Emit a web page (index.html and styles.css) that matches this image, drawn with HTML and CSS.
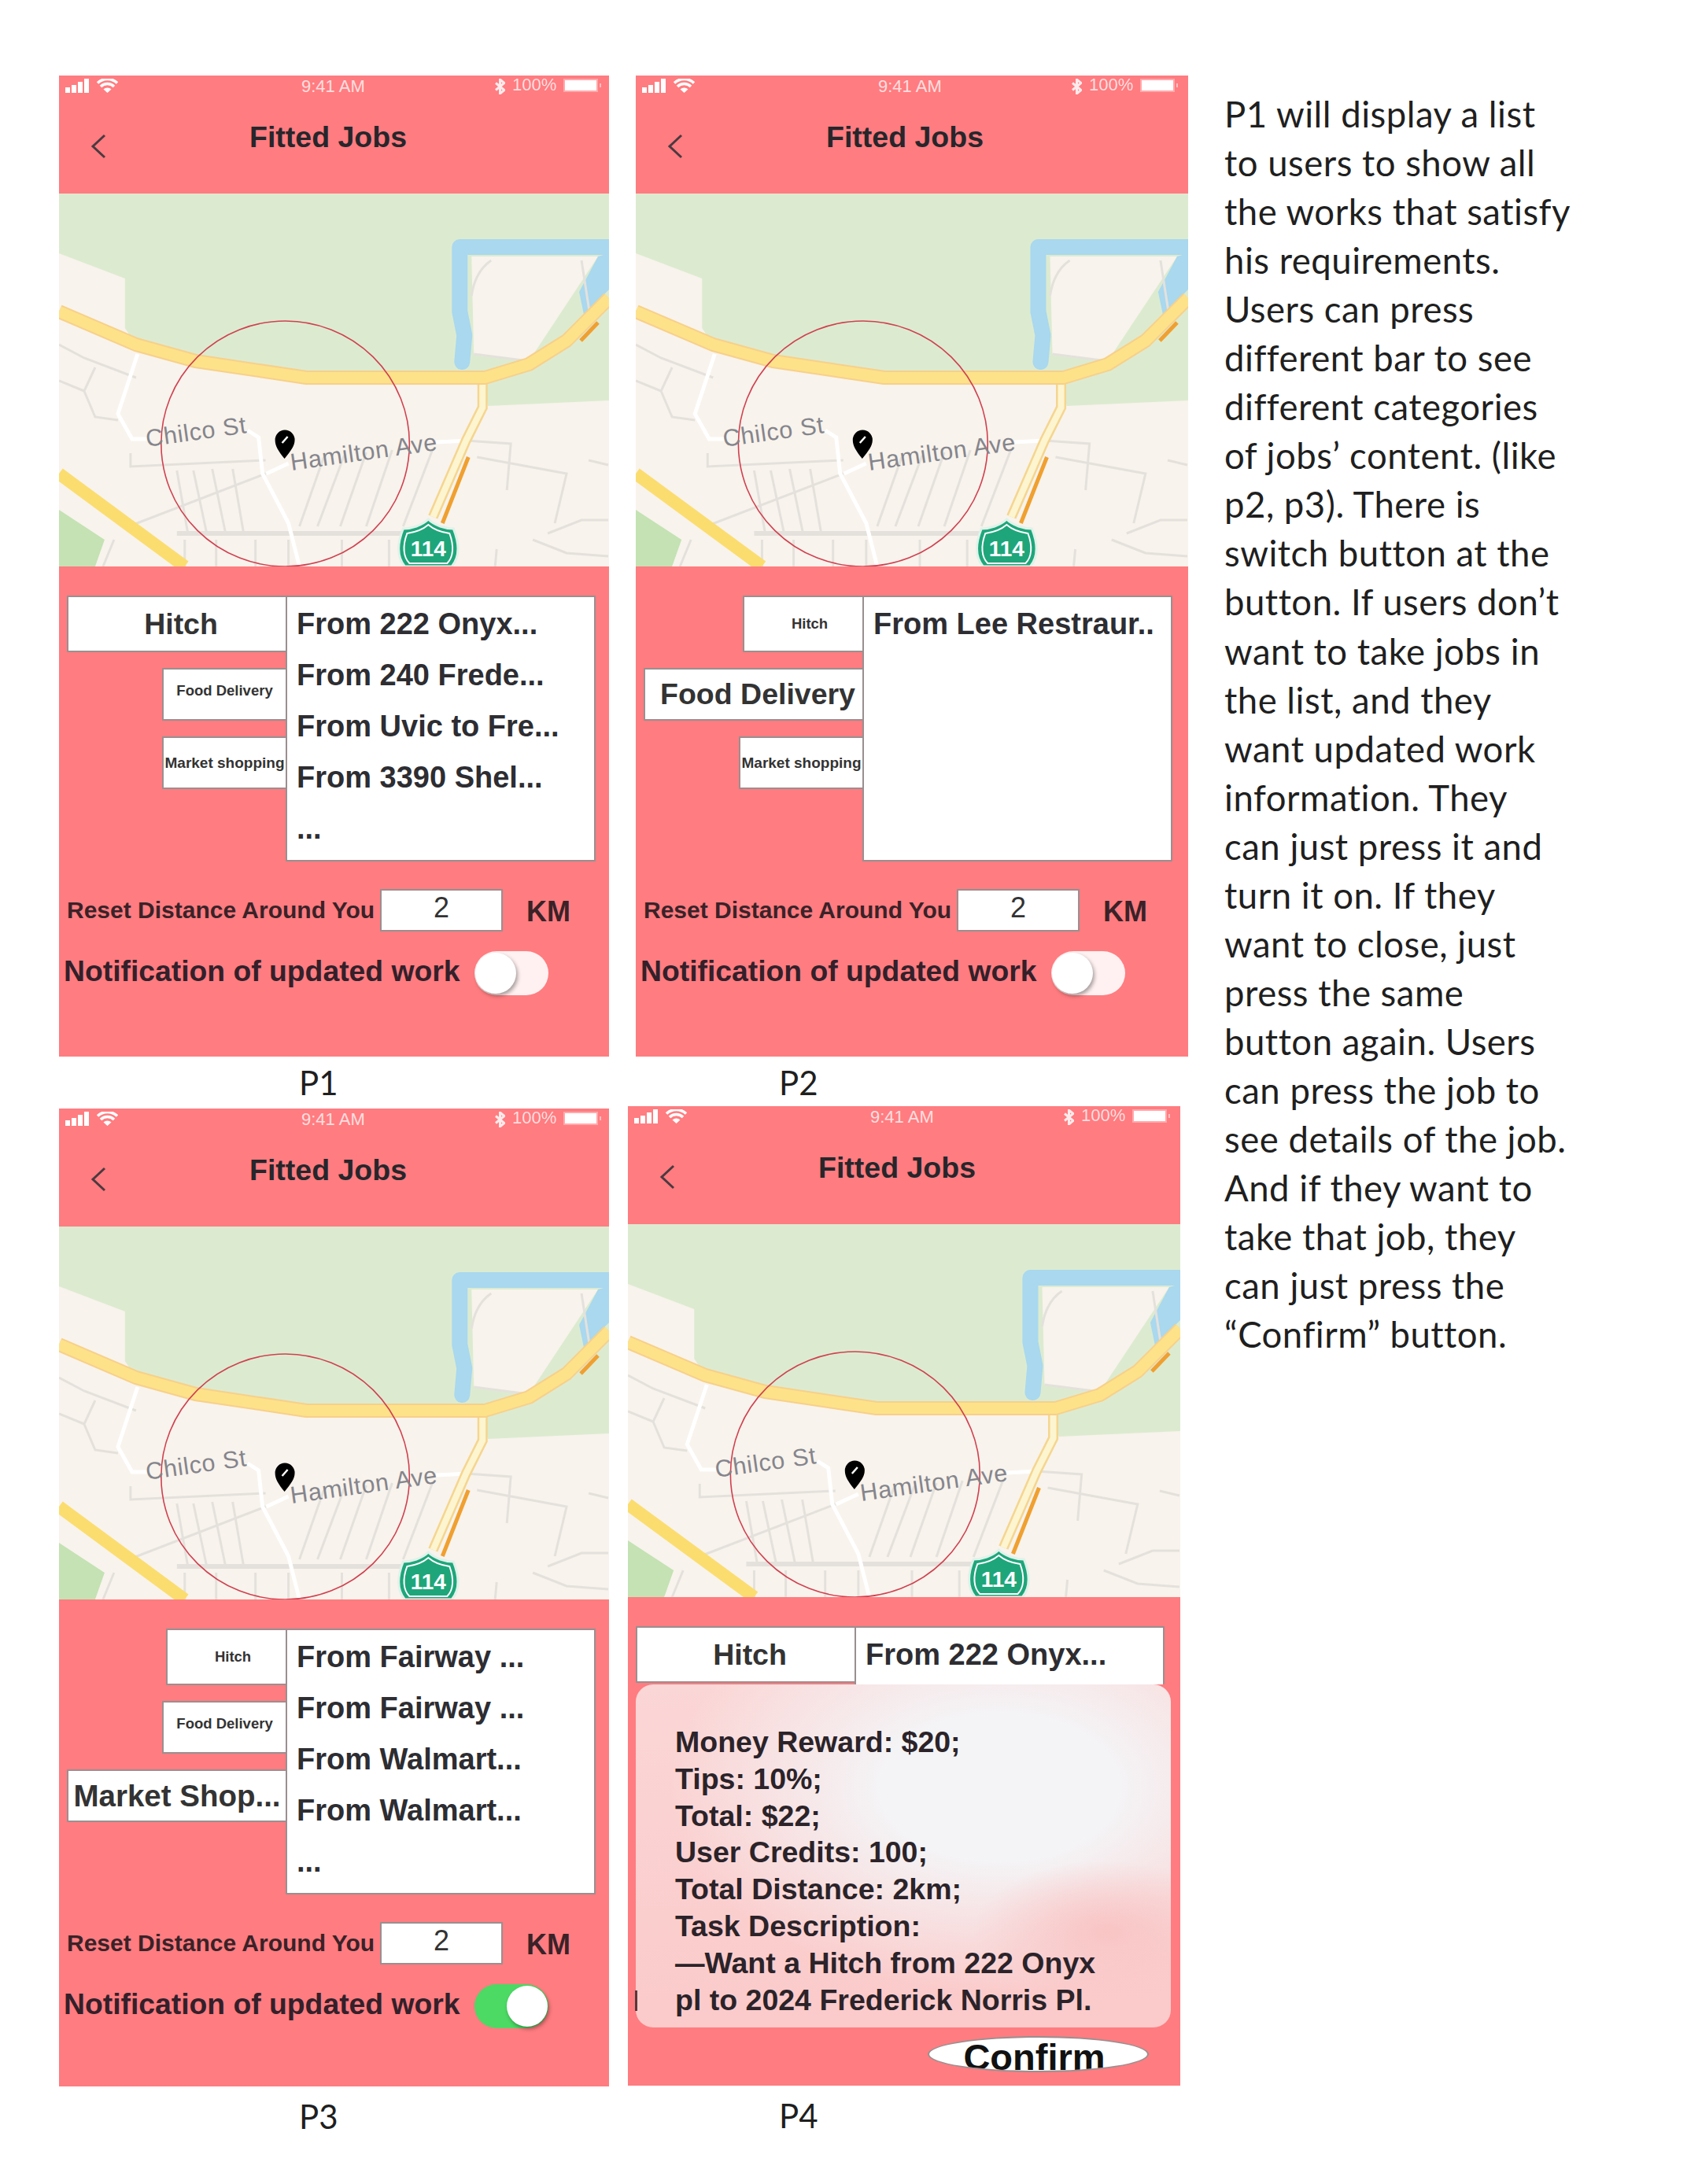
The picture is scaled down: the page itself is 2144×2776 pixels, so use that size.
FILE: index.html
```html
<!DOCTYPE html>
<html>
<head>
  <title>Fitted Jobs</title>
  <link rel="stylesheet" href="styles.css">
</head>
<body>
  <!-- Shared drawings, labels are added per screen -->
  <svg class="defs">
    <symbol id="map" viewBox="0 0 700 474" preserveAspectRatio="none">
      <rect width="700" height="474" fill="#f8f3ec"/>
      <path d="M0 0H700V263L546 270L540 234L315 234L174 213L98 192L84 171V108L0 76Z" fill="#dcebd0"/>
      <path d="M0 402L58 440L46 474H0Z" fill="#c4e2b4"/>
      <path d="M513 214L516 180L510 150V68H700" fill="none" stroke="#a9d8ef" stroke-width="20" stroke-linejoin="round" stroke-linecap="round"/>
      <path d="M525 80H686L598 213L528 204Z" fill="#f8f3ec"/>
      <path d="M686 80L700 76V122L668 154L662 125Z" fill="#a9d8ef"/>
      <g fill="none" stroke="#e4e1dc" stroke-width="3">
        <path d="M337 335L306 423M363 333L329 423M391 329L358 423M424 326L391 423M476 324L438 423"/>
        <path d="M150 352L164 432M171 352L188 432M195 350L212 432M221 350L235 432"/>
        <path d="M91 330V347L263 339M89 423L263 356M56 474L70 440"/>
        <path d="M0 192L32 209L98 234M46 221L32 251L46 284L75 288M0 238L32 251"/>
        <path d="M518 314L575 318L570 377M532 335L646 356L631 419M674 339L699 345"/>
        <path d="M622 432L665 415L699 415M603 440L646 457L699 461M557 452L555 474"/>
        <path d="M160 440V474M200 440V474M250 440V474M292 440V474M360 440V474M420 440V474"/>
        <path d="M528 204L598 213M550 85C535 95 528 110 525 130M665 85L675 150"/>
        <path d="M150 432H438" stroke-width="6"/>
      </g>
      <path d="M100 204L75 280L93 312H112M240 301L254 310L259 356L292 419L306 474M264 356L292 343M480 316L518 314" fill="none" stroke="#fff" stroke-width="5"/>
      <path d="M0 356L160 474" fill="none" stroke="#fbdd6f" stroke-width="16"/>
      <path d="M539 238V272L518 314L476 411" fill="none" stroke="#f5d58f" stroke-width="13"/>
      <path d="M539 238V272L518 314L476 411" fill="none" stroke="#fdf5d0" stroke-width="8"/>
      <path d="M0 150L98 192L174 213L315 234H542L598 217L646 187L700 133" fill="none" stroke="#f7d08a" stroke-width="18" stroke-linejoin="round"/>
      <path d="M0 150L98 192L174 213L315 234H542L598 217L646 187L700 133" fill="none" stroke="#fde28a" stroke-width="14" stroke-linejoin="round"/>
      <path d="M664 187L686 164M488 419L521 335" fill="none" stroke="#f0a030" stroke-width="5"/>
      <path d="M470 414C478 422 492 426 502 426C510 446 510 462 500 474H440C430 462 430 446 438 426C448 426 462 422 470 414Z" fill="#1ea67a" stroke="#dff2ea" stroke-width="3"/>
      <path d="M470 421C478 428 490 431 497 432C503 448 502 462 494 470H446C438 462 437 448 443 432C450 431 462 428 470 421Z" fill="none" stroke="#fff" stroke-width="2"/>
      <ellipse cx="288" cy="318" rx="158" ry="156" fill="none" stroke="#d04050" stroke-width="1.6"/>
      <path d="M287 337C279 327 275 321 275 313A12.500 12.500 0 0 1 300 313C300 321 295 327 287 337Z" fill="#000"/>
      <path d="M291 309L284 317" stroke="#fff" stroke-width="2.500"/>
    </symbol>
    <symbol id="signal" viewBox="0 0 67 18">
      <path d="M0 11h6v7H0zM8 8h6v10H8zM16 4h6v14h-6zM24 0h6v18h-6z" fill="#fff"/>
      <path d="M41 5.500a18 18 0 0 1 25 0M45 10a12 12 0 0 1 17 0" fill="none" stroke="#fff" stroke-width="3.500"/>
      <path d="M48.500 13.500a7 7 0 0 1 10 0L53.500 18Z" fill="#fff"/>
    </symbol>
    <symbol id="bluetooth" viewBox="0 0 13 20">
      <path d="M1 5.500l11 9-5.500 4.500V1l5.500 4.500-11 9" fill="none" stroke="#fff" stroke-width="3"/>
    </symbol>
    <symbol id="chevron" viewBox="0 0 20 32">
      <path d="M18 2L3 16l15 14" fill="none" stroke="#4a3a40" stroke-width="3"/>
    </symbol>
  </svg>

  <div class="sheet">
    <div class="boards">
      <div class="row row-top">
        <!-- P1 -->
        <div class="screen">
          <div class="phone">
            <div class="status">
              <svg class="signal"><use href="#signal"/></svg>
              <span class="time">9:41 AM</span>
              <svg class="bt"><use href="#bluetooth"/></svg>
              <span class="pct">100%</span>
              <span class="battery"></span>
            </div>
            <div class="titlebar">
              <svg class="back"><use href="#chevron"/></svg>
              <h1>Fitted Jobs</h1>
            </div>
            <svg class="map" viewBox="0 0 700 474" preserveAspectRatio="none">
              <use href="#map"/>
              <text class="street" transform="translate(112 322) rotate(-8)">Chilco St</text>
              <text class="street" transform="translate(296 352) rotate(-8)">Hamilton Ave</text>
              <text class="route" x="470" y="461">114</text>
            </svg>
            <div class="panel">
              <div class="browse">
                <div class="tabs">
                  <div class="tab tab-big">Hitch</div>
                  <div class="tab tab-small tab-food">Food Delivery</div>
                  <div class="tab tab-small tab-market">Market shopping</div>
                </div>
                <div class="list">
                  <div class="job">From 222 Onyx...</div>
                  <div class="job">From 240 Frede...</div>
                  <div class="job">From Uvic to Fre...</div>
                  <div class="job">From 3390 Shel...</div>
                  <div class="job">...</div>
                </div>
              </div>
              <div class="distance">
                <span class="distance-label">Reset Distance Around You</span>
                <span class="distance-value">2</span>
                <span class="distance-unit">KM</span>
              </div>
              <div class="notify">
                <span>Notification of updated work</span>
                <span class="toggle"></span>
              </div>
            </div>
          </div>
          <div class="caption">P1</div>
        </div>

        <!-- P2 -->
        <div class="screen">
          <div class="phone phone-wide">
            <div class="status">
              <svg class="signal"><use href="#signal"/></svg>
              <span class="time">9:41 AM</span>
              <svg class="bt"><use href="#bluetooth"/></svg>
              <span class="pct">100%</span>
              <span class="battery"></span>
            </div>
            <div class="titlebar">
              <svg class="back"><use href="#chevron"/></svg>
              <h1>Fitted Jobs</h1>
            </div>
            <svg class="map" viewBox="0 0 700 474" preserveAspectRatio="none">
              <use href="#map"/>
              <text class="street" transform="translate(112 322) rotate(-8)">Chilco St</text>
              <text class="street" transform="translate(296 352) rotate(-8)">Hamilton Ave</text>
              <text class="route" x="470" y="461">114</text>
            </svg>
            <div class="panel">
              <div class="browse">
                <div class="tabs">
                  <div class="tab tab-small tab-hitch">Hitch</div>
                  <div class="tab tab-big tab-mid">Food Delivery</div>
                  <div class="tab tab-small tab-market">Market shopping</div>
                </div>
                <div class="list">
                  <div class="job">From Lee Restraur..</div>
                </div>
              </div>
              <div class="distance">
                <span class="distance-label">Reset Distance Around You</span>
                <span class="distance-value">2</span>
                <span class="distance-unit">KM</span>
              </div>
              <div class="notify">
                <span>Notification of updated work</span>
                <span class="toggle"></span>
              </div>
            </div>
          </div>
          <div class="caption">P2</div>
        </div>
      </div>

      <div class="row row-bottom">
        <!-- P3 -->
        <div class="screen screen-p3">
          <div class="phone phone-short">
            <div class="status">
              <svg class="signal"><use href="#signal"/></svg>
              <span class="time">9:41 AM</span>
              <svg class="bt"><use href="#bluetooth"/></svg>
              <span class="pct">100%</span>
              <span class="battery"></span>
            </div>
            <div class="titlebar">
              <svg class="back"><use href="#chevron"/></svg>
              <h1>Fitted Jobs</h1>
            </div>
            <svg class="map" viewBox="0 0 700 474" preserveAspectRatio="none">
              <use href="#map"/>
              <text class="street" transform="translate(112 322) rotate(-8)">Chilco St</text>
              <text class="street" transform="translate(296 352) rotate(-8)">Hamilton Ave</text>
              <text class="route" x="470" y="461">114</text>
            </svg>
            <div class="panel">
              <div class="browse">
                <div class="tabs">
                  <div class="tab tab-small tab-hitch">Hitch</div>
                  <div class="tab tab-small tab-food">Food Delivery</div>
                  <div class="tab tab-big tab-low">Market Shop...</div>
                </div>
                <div class="list">
                  <div class="job">From Fairway ...</div>
                  <div class="job">From Fairway ...</div>
                  <div class="job">From Walmart...</div>
                  <div class="job">From Walmart...</div>
                  <div class="job">...</div>
                </div>
              </div>
              <div class="distance">
                <span class="distance-label">Reset Distance Around You</span>
                <span class="distance-value">2</span>
                <span class="distance-unit">KM</span>
              </div>
              <div class="notify">
                <span>Notification of updated work</span>
                <span class="toggle toggle-on"></span>
              </div>
            </div>
          </div>
          <div class="caption">P3</div>
        </div>

        <!-- P4 -->
        <div class="screen screen-p4">
          <div class="phone phone-wide phone-detail">
            <div class="status">
              <svg class="signal"><use href="#signal"/></svg>
              <span class="time">9:41 AM</span>
              <svg class="bt"><use href="#bluetooth"/></svg>
              <span class="pct">100%</span>
              <span class="battery"></span>
            </div>
            <div class="titlebar">
              <svg class="back"><use href="#chevron"/></svg>
              <h1>Fitted Jobs</h1>
            </div>
            <svg class="map" viewBox="0 0 700 474" preserveAspectRatio="none">
              <use href="#map"/>
              <text class="street" transform="translate(112 322) rotate(-8)">Chilco St</text>
              <text class="street" transform="translate(296 352) rotate(-8)">Hamilton Ave</text>
              <text class="route" x="470" y="461">114</text>
            </svg>
            <div class="panel">
              <div class="browse browse-single">
                <div class="tabs">
                  <div class="tab tab-big">Hitch</div>
                </div>
                <div class="list list-single">
                  <div class="job">From 222 Onyx...</div>
                </div>
              </div>
              <div class="detail">
                <div>Money Reward: $20;</div>
                <div>Tips: 10%;</div>
                <div>Total: $22;</div>
                <div>User Credits: 100;</div>
                <div>Total Distance: 2km;</div>
                <div>Task Description:</div>
                <div>—Want a Hitch from 222 Onyx</div>
                <div>pl to 2024 Frederick Norris Pl.</div>
              </div>
              <span class="stray"></span>
              <div class="confirm">Confirm</div>
            </div>
          </div>
          <div class="caption">P4</div>
        </div>
      </div>
    </div>

    <p class="notes">
      P1 will display a list<br>
      to users to show all<br>
      the works that satisfy<br>
      his requirements.<br>
      Users can press<br>
      different bar to see<br>
      different categories<br>
      of jobs’ content. (like<br>
      p2, p3). There is<br>
      switch button at the<br>
      button. If users don’t<br>
      want to take jobs in<br>
      the list, and they<br>
      want updated work<br>
      information. They<br>
      can just press it and<br>
      turn it on. If they<br>
      want to close, just<br>
      press the same<br>
      button again. Users<br>
      can press the job to<br>
      see details of the job.<br>
      And if they want to<br>
      take that job, they<br>
      can just press the<br>
      “Confirm” button.
    </p>
  </div>
</body>
</html>
```

FILE: styles.css
```css
/* Page */
body {
  margin: 0;
  background: #fff;
  font-family: "Liberation Sans", Arial, sans-serif;
  color: #2b2b30;
}

.defs {
  display: none;
}

.sheet {
  display: flex;
  padding: 96px 0 0 75px;
}

.boards {
  width: 1481px;
  flex: none;
}

.row {
  display: flex;
}

.row-top {
  gap: 34px;
  height: 1310px;
}

.row-bottom {
  gap: 24px;
}

.screen-p3 {
  margin-top: 3px;
}

/* Phone frame */
.phone {
  display: flex;
  flex-direction: column;
  width: 699px;
  height: 1247px;
  background: #ff7c80;
  filter: blur(0.6px);
}

.phone-wide {
  width: 702px;
}

.phone-short {
  height: 1243px;
}

.phone-detail {
  height: 1245px;
}

.status {
  display: flex;
  align-items: center;
  height: 27px;
  padding-left: 8px;
  color: #fff;
  font-size: 22px;
}

.signal {
  width: 67px;
  height: 18px;
  margin-bottom: 2px;
}

.time {
  margin-left: 233px;
  width: 80px;
  opacity: 0.75;
  white-space: nowrap;
}

.bt {
  width: 13px;
  height: 20px;
  margin-left: 166px;
  opacity: 0.85;
}

.pct {
  margin: 0 0 4px 9px;
  width: 60px;
  opacity: 0.75;
}

.battery {
  position: relative;
  margin: 0 0 2px 7px;
  width: 40px;
  height: 13px;
  background: #fff;
  box-shadow: 0 0 0 2px rgba(255, 255, 255, 0.35);
}

.battery::after {
  content: "";
  position: absolute;
  top: 4px;
  right: -6px;
  width: 2px;
  height: 5px;
  background: rgba(255, 255, 255, 0.5);
}

.titlebar {
  display: flex;
  align-items: flex-start;
  height: 123px;
  padding-left: 40px;
}

.back {
  width: 20px;
  height: 32px;
  margin-top: 47px;
}

h1 {
  margin: 29px 0 0 182px;
  font-size: 37.500px;
  line-height: 44px;
  font-weight: bold;
  color: #26262b;
}

.map {
  display: block;
  width: 100%;
  height: 474px;
  flex: none;
}

.street {
  font-size: 30.500px;
  fill: #85858c;
  letter-spacing: 0.8px;
}

.route {
  font-size: 28px;
  font-weight: bold;
  fill: #fff;
  text-anchor: middle;
}

/* Lower panel */
.panel {
  position: relative;
  flex: 1;
  padding: 37px 0 0 10px;
}

.browse {
  display: flex;
  height: 338px;
}

.tabs {
  display: flex;
  flex-direction: column;
  align-items: flex-end;
  gap: 20px;
  width: 278px;
}

.tab {
  display: flex;
  align-items: center;
  justify-content: center;
  box-sizing: border-box;
  background: #fff;
  border: 2px solid #9a8f90;
  border-right: 0;
  font-weight: bold;
  color: #333;
  white-space: nowrap;
}

.tab-big {
  width: 278px;
  height: 72px;
  padding-left: 10px;
  font-size: 37.500px;
}

.tab-mid,
.tab-low {
  height: 67px;
}

.tab-low {
  padding-left: 0;
  font-size: 38.500px;
}

.tab-small {
  width: 157px;
  height: 67px;
  padding-bottom: 10px;
  font-size: 18.500px;
}

.tab-hitch {
  width: 152px;
  height: 72px;
  padding: 0 0 0 16px;
}

.tab-market {
  padding-bottom: 0;
  font-size: 19px;
}

.list {
  flex: none;
  width: 394px;
  box-sizing: border-box;
  background: #fff;
  border: 2px solid #9a8f90;
  padding: 2px 0 0 12px;
}

.job {
  height: 65px;
  line-height: 65px;
  font-size: 38px;
  font-weight: bold;
  color: #2d2d32;
  white-space: nowrap;
}

.distance {
  display: flex;
  align-items: center;
  height: 54px;
  margin-top: 35px;
  font-weight: bold;
  color: #3a2228;
}

.distance-label {
  width: 398px;
  font-size: 30px;
  white-space: nowrap;
}

.distance-value {
  box-sizing: border-box;
  width: 156px;
  height: 54px;
  padding-bottom: 6px;
  background: #fff;
  border: 2px solid #9a8f90;
  font-size: 36px;
  font-weight: normal;
  line-height: 44px;
  text-align: center;
  color: #333;
}

.distance-unit {
  margin: 4px 0 0 30px;
  font-size: 36px;
}

.notify {
  display: flex;
  align-items: center;
  height: 56px;
  margin: 25px 0 0 -4px;
  font-size: 37.300px;
  font-weight: bold;
  color: #33202a;
}

.notify span:first-child {
  width: 522px;
  white-space: nowrap;
  margin-bottom: 6px;
}

.toggle {
  position: relative;
  width: 94px;
  height: 56px;
  border-radius: 28px;
  background: #fff1f1;
}

.toggle::after {
  content: "";
  position: absolute;
  top: 2px;
  left: 1px;
  width: 52px;
  height: 52px;
  border-radius: 50%;
  background: #fff;
  box-shadow: 2px 3px 5px rgba(0, 0, 0, 0.35);
}

.toggle-on {
  background: #4cd964;
}

.toggle-on::after {
  left: 41px;
}

/* P4 detail card */
.browse-single {
  height: 74px;
}

.list-single {
  border-bottom: 0;
}

.detail {
  position: relative;
  width: 680px;
  height: 436px;
  box-sizing: border-box;
  padding: 50px 0 0 50px;
  border-radius: 22px;
  background:
    radial-gradient(ellipse 170px 90px at 88% 72%, #f9c4c4 0, rgba(249, 196, 196, 0) 100%),
    radial-gradient(ellipse 420px 260px at 68% 30%, #f4f4f6 35%, rgba(244, 244, 246, 0) 100%),
    linear-gradient(180deg, #fbd6d6 0, #fbcaca 100%);
  font-size: 37.500px;
  line-height: 46.800px;
  font-weight: bold;
  color: #2b2329;
  white-space: nowrap;
}

.stray {
  position: absolute;
  left: 9px;
  top: 500px;
  width: 3px;
  height: 26px;
  background: #55383c;
}

.confirm {
  overflow: hidden;
  box-sizing: border-box;
  width: 281px;
  height: 46px;
  margin: 11px 0 0 371px;
  background: #fff;
  border: 2px solid #9a8f90;
  border-radius: 50%;
  font-size: 47px;
  line-height: 50px;
  padding-right: 10px;
  font-weight: bold;
  color: #111;
  text-align: center;
}

/* Labels and side text */
.caption {
  margin: 9px 0 0 305px;
  font-family: Lato, "Liberation Sans", sans-serif;
  font-size: 42px;
  line-height: 48px;
  color: #1f1f1f;
}

.row-bottom .caption {
  margin-top: 14px;
}

.screen:nth-child(2) .caption {
  margin-left: 182px;
}

.screen-p4:nth-child(2) .caption {
  margin-left: 192px;
}

.notes {
  margin: 18px 0 0 0;
  font-family: Lato, "Liberation Sans", sans-serif;
  font-size: 45.500px;
  line-height: 62.040px;
  letter-spacing: 0.5px;
  color: #1f1f1f;
  white-space: nowrap;
}
```
